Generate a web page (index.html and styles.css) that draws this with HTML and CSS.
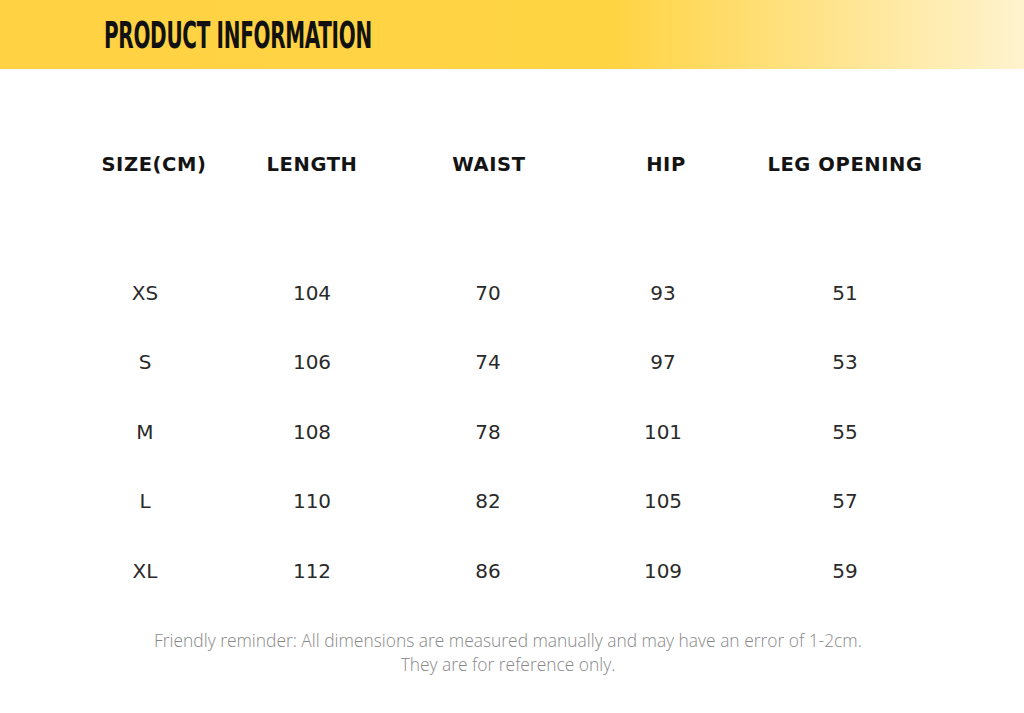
FILE: index.html
```html
<!DOCTYPE html>
<html lang="en">
<head>
<meta charset="utf-8">
<title>Product Information</title>
<link rel="stylesheet" href="styles.css">
</head>
<body>
<header class="banner">
  <h1 class="banner-title">PRODUCT INFORMATION</h1>
</header>
<main class="chart">
  <div class="row head-row">
    <div class="cell">SIZE(CM)</div>
    <div class="cell">LENGTH</div>
    <div class="cell">WAIST</div>
    <div class="cell">HIP</div>
    <div class="cell">LEG OPENING</div>
  </div>
  <div class="body-rows">
    <div class="row data-row"><div class="cell">XS</div><div class="cell">104</div><div class="cell">70</div><div class="cell">93</div><div class="cell">51</div></div>
    <div class="row data-row"><div class="cell">S</div><div class="cell">106</div><div class="cell">74</div><div class="cell">97</div><div class="cell">53</div></div>
    <div class="row data-row"><div class="cell">M</div><div class="cell">108</div><div class="cell">78</div><div class="cell">101</div><div class="cell">55</div></div>
    <div class="row data-row"><div class="cell">L</div><div class="cell">110</div><div class="cell">82</div><div class="cell">105</div><div class="cell">57</div></div>
    <div class="row data-row"><div class="cell">XL</div><div class="cell">112</div><div class="cell">86</div><div class="cell">109</div><div class="cell">59</div></div>
  </div>
  <p class="note">Friendly reminder: All dimensions are measured manually and may have an error of 1-2cm.<br>They are for reference only.</p>
</main>
</body>
</html>
```

FILE: styles.css
```css
html, body {
  margin: 0;
  padding: 0;
  background: #ffffff;
}
body {
  width: 1024px;
  height: 713px;
  overflow: hidden;
  font-family: "DejaVu Sans", "Noto Sans", sans-serif;
}
.banner {
  height: 69px;
  background: linear-gradient(90deg, #ffd243 0%, #ffd443 60%, #ffe38a 80%, #fff3cf 100%);
  display: flex;
  align-items: center;
  padding-left: 104px;
}
.banner-title {
  margin: 2px 0 0;
  font-family: "DejaVu Sans Condensed", "DejaVu Sans", sans-serif;
  font-stretch: condensed;
  font-weight: bold;
  font-size: 37px;
  line-height: 37px;
  color: #111;
  letter-spacing: -0.5px;
  transform: scaleX(0.6);
  transform-origin: left center;
  white-space: nowrap;
}
.chart {
  padding-top: 77px;
}
.row {
  display: grid;
  grid-template-columns: 166px 168px 184px 166px 198px;
  padding-left: 62px;
  align-items: center;
}
.cell {
  text-align: center;
  white-space: nowrap;
}
.head-row {
  height: 36px;
  font-weight: bold;
  font-size: 19.5px;
  letter-spacing: 0.6px;
  color: #141414;
}
.head-row .cell:first-child { padding-left: 18px; }
.head-row .cell:nth-child(4) { padding-left: 6px; }
.head-row .cell:nth-child(3) { padding-left: 2px; }
.body-rows {
  padding-top: 76px;
}
.data-row {
  height: 69.5px;
  font-weight: normal;
  font-size: 20px;
  color: #2a2a2a;
}
.note {
  margin: 22px 0 0;
  text-align: center;
  font-family: "Open Sans", "Noto Sans", sans-serif;
  font-weight: 300;
  font-size: 17.4px;
  line-height: 24px;
  color: #888888;
  padding-right: 8px;
}
```
